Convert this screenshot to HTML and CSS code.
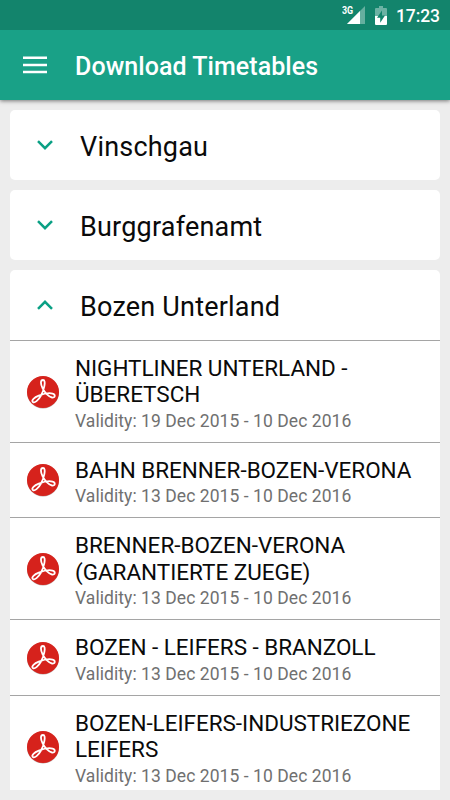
FILE: index.html
```html
<!DOCTYPE html>
<html lang="en">
<head>
<meta charset="utf-8">
<title>Download Timetables</title>
<link rel="stylesheet" href="styles.css">
</head>
<body>
<svg class="defs" width="0" height="0">
  <symbol id="pdf" viewBox="0 0 34 34">
    <circle cx="17" cy="17.5" r="16" fill="#b9a5a3"/>
    <circle cx="17" cy="17" r="16" fill="#d6221c"/>
    <path d="M17 5C14.2 5 14.5 9 16.5 13.1C18.8 17.8 23 22 26 22.5C29.3 23 29.8 19.5 26.5 18.6C23 17.7 17 19 12.8 20.7C8.2 22.6 5.2 25 6.8 26.8C8.5 28.6 12.3 25.4 15 20.5C17.8 15.4 20.6 5 17 5Z" fill="none" stroke="#fff" stroke-width="1.8" stroke-linejoin="round"/>
  </symbol>
  <symbol id="chevron" viewBox="0 0 16 10">
    <path d="M1 1.2L8 8.2L15 1.2" fill="none" stroke="#0aa084" stroke-width="2.5"/>
  </symbol>
</svg>
<header class="top">
  <div class="status">
    <span class="network">3G</span>
    <svg class="signal" width="18" height="18" viewBox="0 0 18 18"><path d="M18 0V18H0Z" fill="#fff" opacity=".35"/><path d="M13 5V18H0Z" fill="#fff"/></svg>
    <svg class="battery" width="12" height="19" viewBox="0 0 12 19"><path d="M4 0H8V2H11Q12 2 12 3V10H0V3Q0 2 1 2H4Z" fill="#fff" opacity=".38"/><path d="M0 10H12V18Q12 19 11 19H1Q0 19 0 18Z" fill="#fff"/><path d="M7 4.5L2 11.8H5.2V16.8L10 9.5H7Z" fill="#13846c"/></svg>
    <span class="clock">17:23</span>
  </div>
  <div class="bar">
    <svg class="menu" width="24" height="18" viewBox="0 0 24 18"><path d="M0 1.7H24M0 8.9H24M0 16.1H24" stroke="#fff" stroke-width="2.5"/></svg>
    <h1>Download Timetables</h1>
  </div>
</header>
<main>
  <section class="card"><h2><svg class="chevron"><use href="#chevron"/></svg><span>Vinschgau</span></h2></section>
  <section class="card"><h2><svg class="chevron"><use href="#chevron"/></svg><span>Burggrafenamt</span></h2></section>
  <section class="card open">
    <h2><svg class="chevron up"><use href="#chevron"/></svg><span>Bozen Unterland</span></h2>
    <ul>
      <li><svg class="pdf"><use href="#pdf"/></svg><div><h3>NIGHTLINER UNTERLAND -<br>ÜBERETSCH</h3><p>Validity: 19 Dec 2015 - 10 Dec 2016</p></div></li>
      <li><svg class="pdf"><use href="#pdf"/></svg><div><h3>BAHN BRENNER-BOZEN-VERONA</h3><p>Validity: 13 Dec 2015 - 10 Dec 2016</p></div></li>
      <li><svg class="pdf"><use href="#pdf"/></svg><div><h3>BRENNER-BOZEN-VERONA<br>(GARANTIERTE ZUEGE)</h3><p>Validity: 13 Dec 2015 - 10 Dec 2016</p></div></li>
      <li><svg class="pdf"><use href="#pdf"/></svg><div><h3>BOZEN - LEIFERS - BRANZOLL</h3><p>Validity: 13 Dec 2015 - 10 Dec 2016</p></div></li>
      <li><svg class="pdf"><use href="#pdf"/></svg><div><h3>BOZEN-LEIFERS-INDUSTRIEZONE<br>LEIFERS</h3><p>Validity: 13 Dec 2015 - 10 Dec 2016</p></div></li>
    </ul>
  </section>
</main>
</body>
</html>
```
FILE: styles.css
```css
* { box-sizing: border-box; margin: 0; padding: 0; }
body {
  display: flex;
  flex-direction: column;
  height: 800px;
  overflow: hidden;
  background: #ededed;
  font-family: Roboto, "Liberation Sans", sans-serif;
  color: #0a0a0a;
}
.defs { position: absolute; }
.top { flex: none; background: #19a187; color: #fff; box-shadow: 0 1px 4px rgba(0, 0, 0, .5); }
.status {
  display: flex;
  justify-content: flex-end;
  align-items: flex-start;
  height: 30px;
  padding: 6px 10px 0 0;
  background: #13846c;
}
.network { margin-right: -8px; font-size: 10.5px; line-height: 10px; font-weight: 700; transform: scaleX(.85); transform-origin: left; }
.signal { margin-right: 10px; }
.battery { margin-right: 9px; }
.clock { width: 44px; font-size: 17.5px; line-height: 20px; font-weight: 500; letter-spacing: -.1px; }
.bar { display: flex; align-items: center; height: 70px; padding-left: 23px; }
.menu { margin-right: 28px; }
h1 { padding-top: 4px; font-size: 25px; line-height: 30px; font-weight: 500; letter-spacing: .06px; }
main { display: flex; flex: 1; flex-direction: column; gap: 10px; min-height: 0; padding: 10px; }
.card { flex: none; overflow: hidden; border-radius: 5px; background: #fff; }
.card.open { flex: 1; min-height: 0; border-radius: 5px 5px 0 0; }
h2 { display: flex; align-items: center; height: 70px; padding-left: 27px; font-size: 27px; font-weight: 400; letter-spacing: .2px; }
h2 span { padding-top: 3px; }
.chevron { width: 16px; height: 10px; margin-right: 27px; }
.up { transform: rotate(180deg); }
ul { list-style: none; }
li { display: flex; align-items: center; border-top: 1px solid #a5a5a5; padding: 14px 0 10.8px 15.5px; }
.pdf { flex: none; width: 34px; height: 34px; margin: -3px 15.5px 0 0; }
h3 { font-size: 22.5px; line-height: 26.3px; font-weight: 400; letter-spacing: -.03px; white-space: nowrap; }
p { margin-top: 3px; font-size: 17.5px; line-height: 20.5px; color: #707070; letter-spacing: .06px; white-space: nowrap; }
```
